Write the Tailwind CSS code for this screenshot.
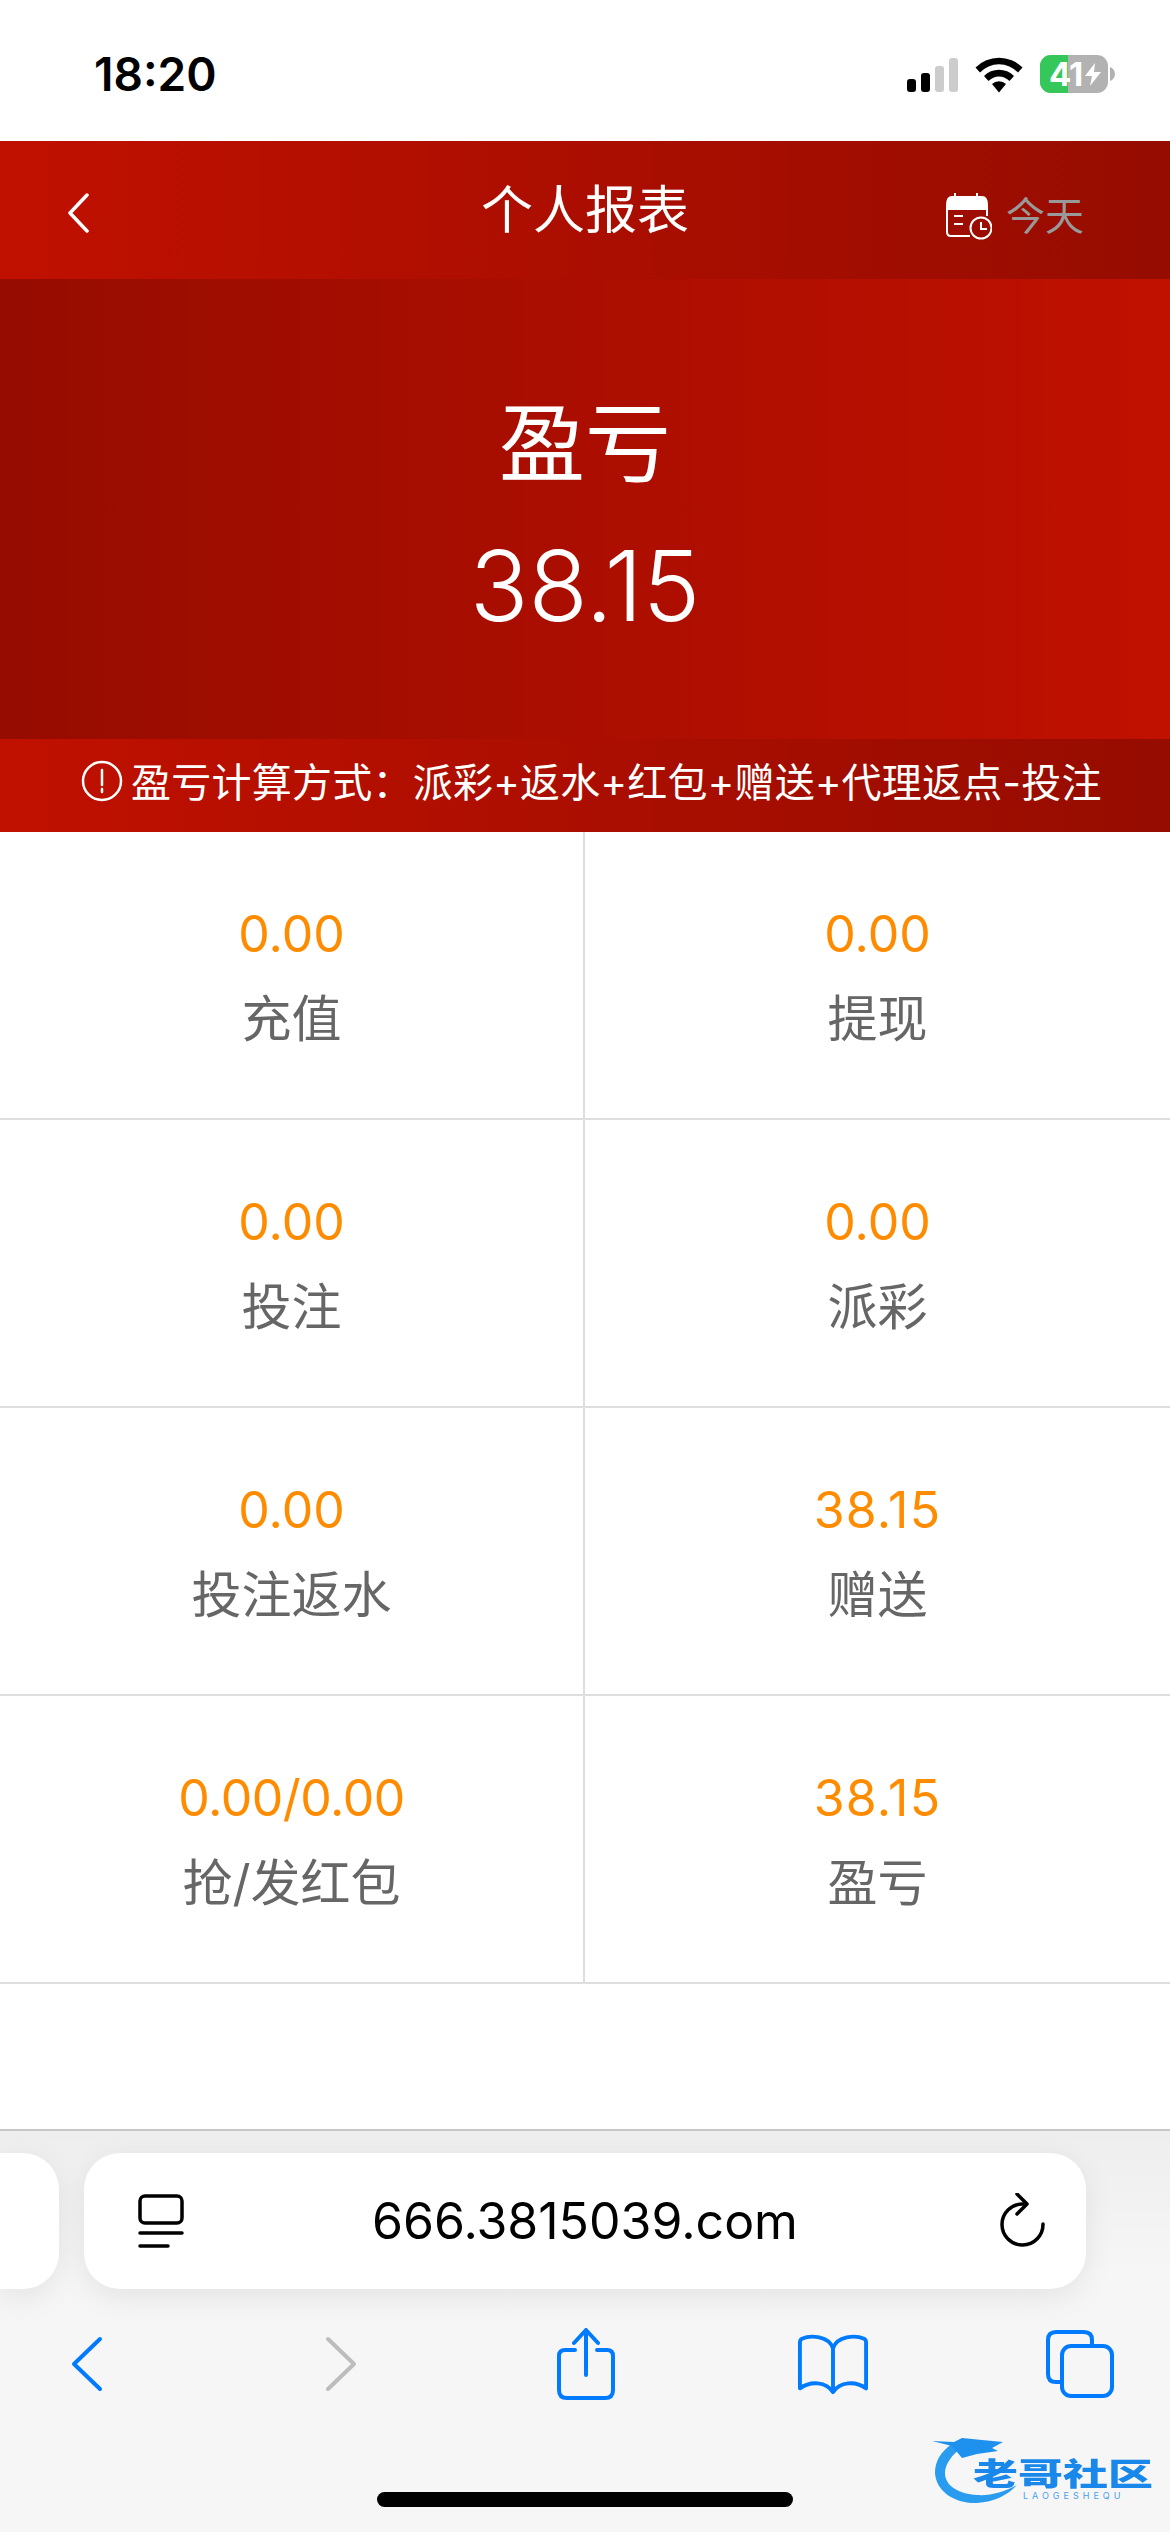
<!DOCTYPE html>
<html lang="zh-CN">
<head>
    <meta charset="UTF-8">
    <meta name="viewport" content="width=device-width, initial-scale=1.0">
    <title>个人报表</title>
    <script src="https://cdn.jsdelivr.net/npm/@tailwindcss/browser@4"></script>
</head>
<body class="bg-white font-['Inter','Noto_Sans_CJK_SC',sans-serif]">
<div class="relative w-[1170px] h-[2532px] overflow-hidden flex flex-col">

    <!-- Status bar -->
    <div class="h-[141px] shrink-0 bg-white flex items-start">
        <span class="ml-[94px] mt-[49px] text-[46px] leading-[50px] font-semibold text-black">18:20</span>
        <div class="ml-auto mr-[55px] mt-[55px] flex items-start">
            <svg class="w-[52px] h-[36px] mt-[2px]" viewBox="0 0 52 36">
                <rect x="0" y="22" width="9" height="13" rx="3" fill="#000"/>
                <rect x="14" y="16" width="9" height="19" rx="3" fill="#000"/>
                <rect x="28" y="9" width="9" height="26" rx="3" fill="#ccc"/>
                <rect x="42" y="1" width="9" height="34" rx="3" fill="#ccc"/>
            </svg>
            <svg class="w-[48px] h-[38px] ml-[16px]" viewBox="0 0 48 38">
                <path d="M0.5 12.5A33 33 0 0 1 47.5 12.5L43 17.5A26 26 0 0 0 5 17.5Z" fill="#000"/>
                <path d="M9 21A21 21 0 0 1 39 21L34.500 26A14.500 14.500 0 0 0 13.500 26Z" fill="#000"/>
                <path d="M17 29A10 10 0 0 1 31 29L24 37.500Z" fill="#000"/>
            </svg>
            <div class="relative ml-[17px] w-[68px] h-[38px] rounded-[11px] overflow-hidden bg-[#b2b2b2] flex items-center">
                <div class="absolute left-0 top-0 w-[28px] h-full bg-[#35c759]"></div>
                <span class="relative ml-[9px] text-[33px] leading-[38px] font-bold text-white tracking-[-1px]">41</span>
                <svg class="absolute right-[7px] top-[8px] w-[16px] h-[23px]" viewBox="0 0 16 23"><path d="M10 0L0 13H7L5 23L16 9H9Z" fill="#fff"/></svg>
            </div>
            <svg class="w-[5px] h-[14px] mt-[12px] ml-[2px]" viewBox="0 0 5 14"><path d="M0 0C3 1 5 4 5 7S3 13 0 14Z" fill="#b2b2b2"/></svg>
        </div>
    </div>

    <!-- Header -->
    <header class="h-[138px] shrink-0 bg-linear-to-r from-[#c01000] to-[#960c00] flex items-center relative">
        <svg class="ml-[66px] w-[24px] h-[40px] mt-[6px]" viewBox="0 0 24 40" fill="none" stroke="#fff" stroke-width="3.500" stroke-linecap="round" stroke-linejoin="round"><path d="M21 2L4 20L21 38"/></svg>
        <h1 class="absolute left-0 right-0 text-center text-[52px] leading-[60px] text-white mt-[2px]">个人报表</h1>
        <div class="ml-auto mr-[86px] flex items-center mt-[12px]">
            <svg class="w-[46px] h-[48px]" viewBox="0 0 46 48" fill="none" stroke="#fff">
                <path d="M1 13Q1 5 6 5H36Q41 5 41 13V17H1Z" fill="#fff" stroke-width="2"/>
                <path d="M9 1V6M31 1V6" stroke-width="2"/>
                <path d="M1 17V40Q1 44 5 44H24M41 17V24" stroke-width="2"/>
                <path d="M8 24H17M8 32H17" stroke-width="2"/>
                <circle cx="35" cy="36" r="10.500" stroke-width="2" fill="#9a0d00"/>
                <path d="M35 30V37H41" stroke-width="2"/>
            </svg>
            <span class="ml-[14px] text-[39px] leading-[48px] text-[#999]">今天</span>
        </div>
    </header>

    <!-- Hero -->
    <section class="h-[460px] shrink-0 bg-linear-to-r from-[#960c00] to-[#c01000] flex flex-col items-center text-white">
        <h2 class="mt-[115px] text-[86px] leading-[100px]">盈亏</h2>
        <p class="mt-[37px] text-[97px] leading-[110px] font-light">38.15</p>
    </section>

    <!-- Notice -->
    <div class="h-[93px] shrink-0 bg-linear-to-r from-[#c01000] to-[#960c00] flex items-center text-white">
        <svg class="ml-[81px] w-[42px] h-[42px] mt-[-10px]" viewBox="0 0 42 42" fill="none" stroke="#fff" stroke-width="2.500">
            <circle cx="21" cy="21" r="19"/>
            <path d="M21 10V25M21 29V32" stroke-linecap="round"/>
        </svg>
        <span class="ml-[8px] mt-[-6px] text-[40px] leading-[48px] tracking-[0.25px] whitespace-nowrap">盈亏计算方式：派彩+返水+红包+赠送+代理返点-投注</span>
    </div>

    <!-- Report grid -->
    <div class="grid grid-cols-2 shrink-0">
        <div class="h-[288px] border-b-2 border-r-2 border-[#dedede] flex flex-col items-center">
            <span class="mt-[72px] text-[50px] leading-[60px] text-[#ff8c00]">0.00</span>
            <span class="mt-[25px] text-[50px] leading-[60px] text-[#666]">充值</span>
        </div>
        <div class="h-[288px] border-b-2 border-[#dedede] flex flex-col items-center">
            <span class="mt-[72px] text-[50px] leading-[60px] text-[#ff8c00]">0.00</span>
            <span class="mt-[25px] text-[50px] leading-[60px] text-[#666]">提现</span>
        </div>
        <div class="h-[288px] border-b-2 border-r-2 border-[#dedede] flex flex-col items-center">
            <span class="mt-[72px] text-[50px] leading-[60px] text-[#ff8c00]">0.00</span>
            <span class="mt-[25px] text-[50px] leading-[60px] text-[#666]">投注</span>
        </div>
        <div class="h-[288px] border-b-2 border-[#dedede] flex flex-col items-center">
            <span class="mt-[72px] text-[50px] leading-[60px] text-[#ff8c00]">0.00</span>
            <span class="mt-[25px] text-[50px] leading-[60px] text-[#666]">派彩</span>
        </div>
        <div class="h-[288px] border-b-2 border-r-2 border-[#dedede] flex flex-col items-center">
            <span class="mt-[72px] text-[50px] leading-[60px] text-[#ff8c00]">0.00</span>
            <span class="mt-[25px] text-[50px] leading-[60px] text-[#666]">投注返水</span>
        </div>
        <div class="h-[288px] border-b-2 border-[#dedede] flex flex-col items-center">
            <span class="mt-[72px] text-[50px] leading-[60px] text-[#ff8c00] tracking-[1.200px]">38.15</span>
            <span class="mt-[25px] text-[50px] leading-[60px] text-[#666]">赠送</span>
        </div>
        <div class="h-[288px] border-b-2 border-r-2 border-[#dedede] flex flex-col items-center">
            <span class="mt-[72px] text-[50px] leading-[60px] text-[#ff8c00] tracking-[-0.500px]">0.00/0.00</span>
            <span class="mt-[25px] text-[50px] leading-[60px] text-[#666]">抢/发红包</span>
        </div>
        <div class="h-[288px] border-b-2 border-[#dedede] flex flex-col items-center">
            <span class="mt-[72px] text-[50px] leading-[60px] text-[#ff8c00] tracking-[1.200px]">38.15</span>
            <span class="mt-[25px] text-[50px] leading-[60px] text-[#666]">盈亏</span>
        </div>
    </div>

    <div class="flex-1"></div>

    <!-- Browser toolbar -->
    <div class="h-[403px] shrink-0 border-t-2 border-[#c6c6c6] bg-linear-to-b from-[#eeeeee] to-[#f6f6f6] to-[35%] flex flex-col">
        <div class="mt-[22px] h-[136px] flex">
            <div class="w-[59px] h-full rounded-r-[36px] bg-white shadow-[0_8px_30px_rgba(0,0,0,0.08)]"></div>
            <div class="ml-[25px] w-[1002px] h-full rounded-[36px] bg-white shadow-[0_8px_30px_rgba(0,0,0,0.08)] flex items-center relative">
                <svg class="ml-[54px] w-[46px] h-[56px] mt-[2px]" viewBox="0 0 46 56" fill="none" stroke="#000" stroke-width="3.500" stroke-linecap="round">
                    <rect x="2" y="2" width="42" height="27" rx="5"/>
                    <path d="M2 39H44M2 52H30"/>
                </svg>
                <span class="absolute left-0 right-0 text-center text-[50px] leading-[60px] text-black">666.3815039.com</span>
                <svg class="ml-auto mr-[39px] w-[48px] h-[56px]" viewBox="0 0 48 56" fill="none" stroke="#000" stroke-width="3.500" stroke-linecap="round" stroke-linejoin="round">
                    <path d="M24 11A20.500 20.500 0 1 0 44 31"/>
                    <path d="M18 1L28 11L18 21"/>
                </svg>
            </div>
        </div>

        <div class="mt-[39px] flex items-center h-[72px]">
            <svg class="ml-[71px] w-[32px] h-[56px]" viewBox="0 0 32 56" fill="none" stroke="#007aff" stroke-width="4" stroke-linecap="round" stroke-linejoin="round"><path d="M29 3L3 28L29 53"/></svg>
            <svg class="ml-[222px] w-[32px] h-[56px]" viewBox="0 0 32 56" fill="none" stroke="#bdbdbd" stroke-width="4" stroke-linecap="round" stroke-linejoin="round"><path d="M3 3L29 28L3 53"/></svg>
            <svg class="ml-[200px] w-[58px] h-[72px]" viewBox="0 0 58 72" fill="none" stroke="#007aff" stroke-width="4" stroke-linecap="round" stroke-linejoin="round">
                <path d="M18 22H8Q2 22 2 28V62Q2 70 10 70H48Q56 70 56 62V28Q56 22 50 22H40"/>
                <path d="M29 47V3M17 15L29 2L41 15"/>
            </svg>
            <svg class="ml-[182px] w-[72px] h-[62px]" viewBox="0 0 74 62" fill="none" stroke="#007aff" stroke-width="4" stroke-linecap="round" stroke-linejoin="round">
                <path d="M37 15C33 2 14 1 5 5Q3 6 3 9V56C14 48 30 49 37 60C44 49 60 48 71 56V9Q71 6 69 5C60 1 41 2 37 15V58"/>
            </svg>
            <svg class="ml-[176px] w-[70px] h-[68px]" viewBox="0 0 70 68" fill="none" stroke="#007aff" stroke-width="4" stroke-linecap="round" stroke-linejoin="round">
                <path d="M15 52H11Q3 52 3 44V10Q3 2 11 2H39Q47 2 47 10V16"/>
                <rect x="17" y="16" width="50" height="50" rx="9"/>
            </svg>
        </div>

        <div class="mt-[92px] mx-auto w-[416px] h-[15px] rounded-full bg-black"></div>
    </div>

    <!-- Watermark -->
    <div class="absolute left-[932px] top-[2432px] w-[225px] h-[76px]">
        <svg class="absolute left-0 top-0 w-[90px] h-[76px] blur-[0.7px]" viewBox="0 0 90 76">
            <path d="M21 11C8 20 3 30 3 41C4 60 24 72 45 71C62 70 76 63 85 53C72 60 58 64 45 63C27 62 13 54 13 41C13 32 20 23 30 15Z" fill="#2a9cf0"/>
            <path d="M0 9L22 10L30 6L50 8L71 10L60 16L66 19L45 22L30 26L20 14Z" fill="#1e90ee"/>
        </svg>
        <span class="absolute left-[41px] top-[26px] text-[45px] leading-[32px] font-black text-[#1a88ea] whitespace-nowrap scale-y-[0.68] blur-[0.5px]">老哥社区</span>
        <span class="absolute left-[91px] top-[59px] text-[9px] leading-[9px] text-[#4a9fe8] tracking-[4px] whitespace-nowrap">LAOGESHEQU</span>
    </div>
</div>
</body>
</html>
